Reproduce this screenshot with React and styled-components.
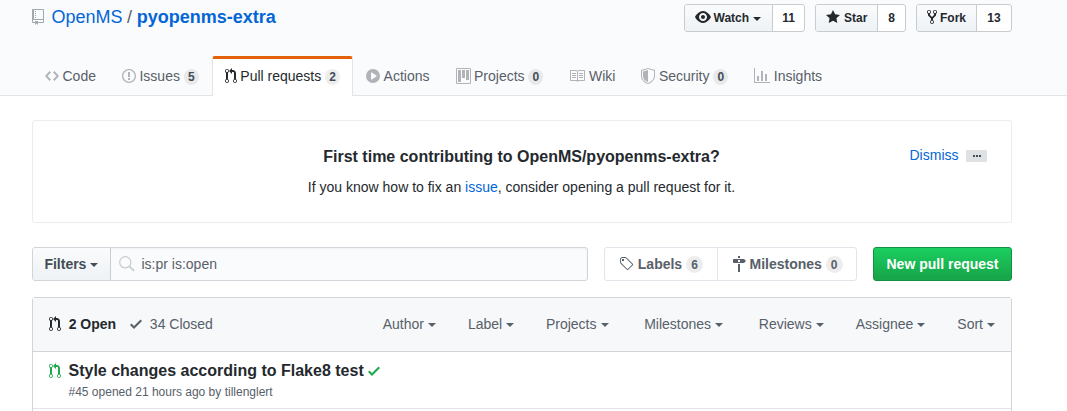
import React from "react";
import styled, { createGlobalStyle, css } from "styled-components";

const GlobalStyle = createGlobalStyle`
  * { box-sizing: border-box; }
  body {
    margin: 0;
    background: #fff;
    color: #24292e;
    font: 14px/21px "Liberation Sans", Arial, sans-serif;
  }
  a { color: #0366d6; text-decoration: none; }
`;

const ICONS = {
  repo: [12, "M4 9H3V8h1v1zm0-3H3v1h1V6zm0-2H3v1h1V4zm0-2H3v1h1V2zm8-1v12c0 .55-.45 1-1 1H6v2l-1.5-1.5L3 16v-2H1c-.55 0-1-.45-1-1V1c0-.55.45-1 1-1h10c.55 0 1 .45 1 1zm-1 10H1v2h2v-1h3v1h5v-2zm0-10H2v9h9V1z"],
  code: [14, "M9.5 3L8 4.5 11.5 8 8 11.5 9.5 13 14 8 9.5 3zm-5 0L0 8l4.5 5L6 11.5 2.5 8 6 4.5 4.5 3z"],
  issue: [14, "M7 2.3c3.14 0 5.7 2.56 5.7 5.7s-2.56 5.7-5.7 5.7A5.71 5.71 0 0 1 1.3 8c0-3.14 2.56-5.7 5.7-5.7zM7 1C3.14 1 0 4.14 0 8s3.14 7 7 7 7-3.14 7-7-3.14-7-7-7zm1 3H6v5h2V4zm0 6H6v2h2v-2z"],
  pull: [12, "M11 11.28V5c-.03-.78-.34-1.47-.94-2.06C9.46 2.35 8.78 2.03 8 2H7V0L4 3l3 3V4h1c.27.02.48.11.69.31.21.2.3.42.31.69v6.28A1.993 1.993 0 0 0 10 15a1.993 1.993 0 0 0 1-3.72zm-1 2.92c-.66 0-1.2-.55-1.2-1.2 0-.65.55-1.2 1.2-1.2.65 0 1.2.55 1.2 1.2 0 .65-.55 1.2-1.2 1.2zM4 3c0-1.11-.89-2-2-2a1.993 1.993 0 0 0-1 3.72v6.56A1.993 1.993 0 0 0 2 15a1.993 1.993 0 0 0 1-3.72V4.72c.59-.34 1-.98 1-1.72zm-.8 10c0 .66-.55 1.2-1.2 1.2-.65 0-1.2-.55-1.2-1.2 0-.65.55-1.2 1.2-1.2.65 0 1.2.55 1.2 1.2zM2 4.2C1.34 4.2.8 3.65.8 3c0-.65.55-1.2 1.2-1.2.65 0 1.2.55 1.2 1.2 0 .65-.55 1.2-1.2 1.2z"],
  play: [14, "M14 8A7 7 0 1 1 0 8a7 7 0 0 1 14 0zm-8.223 3.482l4.599-3.066a.5.5 0 0 0 0-.832L5.777 4.518A.5.5 0 0 0 5 4.934v6.132a.5.5 0 0 0 .777.416z"],
  project: [15, "M10 12h3V2h-3v10zm-4-2h3V2H6v8zm-4 4h3V2H2v12zm-1 1h13V1H1v14zM14 0H1a1 1 0 0 0-1 1v14a1 1 0 0 0 1 1h13a1 1 0 0 0 1-1V1a1 1 0 0 0-1-1z"],
  book: [16, "M3 5h4v1H3V5zm0 3h4V7H3v1zm0 2h4V9H3v1zm11-5h-4v1h4V5zm0 2h-4v1h4V7zm0 2h-4v1h4V9zm2-6v9c0 .55-.45 1-1 1H9.5l-1 1-1-1H2c-.55 0-1-.45-1-1V3c0-.55.45-1 1-1h5.5l1 1 1-1H15c.55 0 1 .45 1 1zm-8 .5L7.5 3H2v9h6V3.5zm7-.5H9.5l-.5.5V12h6V3z"],
  shield: [14, "M0 2l7-2 7 2v6.02C14 12.69 8.69 16 7 16c-1.69 0-7-3.31-7-7.98V2zm1 .75L7 1l6 1.75v5.268C13 12.104 8.449 15 7 15c-1.449 0-6-2.896-6-6.982V2.75zm1 .75L7 2v12c-1.207 0-5-2.482-5-5.985V3.5z"],
  graph: [16, "M16 14v1H0V0h1v14h15zM5 13H3V8h2v5zm4 0H7V3h2v10zm4 0h-2V6h2v7z"],
  eye: [16, "M8.06 2C3 2 0 8 0 8s3 6 8.06 6C13 14 16 8 16 8s-3-6-7.94-6zM8 12c-2.2 0-4-1.78-4-4 0-2.2 1.8-4 4-4 2.22 0 4 1.8 4 4 0 2.22-1.78 4-4 4zm2-4c0 1.11-.89 2-2 2-1.11 0-2-.89-2-2 0-1.11.89-2 2-2 1.11 0 2 .89 2 2z"],
  star: [14, "M14 6l-4.9-.64L7 1 4.9 5.36 0 6l3.6 3.26L2.67 14 7 11.67 11.33 14l-.93-4.74L14 6z"],
  fork: [10, "M8 1a1.993 1.993 0 0 0-1 3.72V6L5 8 3 6V4.72A1.993 1.993 0 0 0 2 1a1.993 1.993 0 0 0-1 3.72V6.5l3 3v1.78A1.993 1.993 0 0 0 5 15a1.993 1.993 0 0 0 1-3.72V9.5l3-3V4.72A1.993 1.993 0 0 0 8 1zM2 4.2C1.34 4.2.8 3.65.8 3c0-.65.55-1.2 1.2-1.2.65 0 1.2.55 1.2 1.2 0 .65-.55 1.2-1.2 1.2zm3 10c-.66 0-1.2-.55-1.2-1.2 0-.65.55-1.2 1.2-1.2.65 0 1.2.55 1.2 1.2 0 .65-.55 1.2-1.2 1.2zm3-10c-.66 0-1.2-.55-1.2-1.2 0-.65.55-1.2 1.2-1.2.65 0 1.2.55 1.2 1.2 0 .65-.55 1.2-1.2 1.2z"],
  tag: [14, "M7.73 1.73C7.26 1.26 6.62 1 5.96 1H3.5C2.13 1 1 2.13 1 3.5v2.47c0 .66.27 1.3.73 1.77l6.06 6.06c.39.39 1.02.39 1.41 0l4.59-4.59a.996.996 0 0 0 0-1.41L7.73 1.73zM2.38 7.09c-.31-.3-.47-.7-.47-1.13V3.5c0-.88.72-1.59 1.59-1.59h2.47c.42 0 .83.16 1.13.47l6.14 6.13-4.73 4.73-6.13-6.15zM3.01 3h2v2H3V3h.01z"],
  milestone: [14, "M8 2H6V0h2v2zm4 5H2c-.55 0-1-.45-1-1V4c0-.55.45-1 1-1h10l2 2-2 2zM8 4H6v2h2V4zM6 16h2V8H6v8z"],
  check: [12, "M12 5l-8 8-4-4 1.5-1.5L4 10l6.5-6.5L12 5z"],
};

const Svg = styled.svg`
  flex: none;
  display: block;
  fill: currentColor;
  color: ${(p) => p.$color || "inherit"};
`;

function Icon({ name, color }) {
  const [w, d] = ICONS[name];
  return (
    <Svg width={w} height="16" viewBox={`0 0 ${w} 16`} $color={color} aria-hidden="true">
      <path fillRule="evenodd" d={d} />
    </Svg>
  );
}

const Caret = styled.span`
  flex: none;
  width: 0;
  height: 0;
  margin: 1px 0 0 4px;
  border: 4px solid transparent;
  border-top-color: currentColor;
  border-bottom-width: 0;
`;

const Page = styled.div`
  height: 411px;
  overflow: hidden;
`;

const Container = styled.div`
  width: 980px;
  margin-left: 32px;
`;

const PageHead = styled.header`
  height: 96px;
  background: #fafbfc;
  border-bottom: 1px solid #e1e4e8;
`;

const TitleRow = styled.div`
  display: flex;
  justify-content: space-between;
  height: 56px;
  padding-top: 4px;
`;

const RepoTitle = styled.h1`
  display: flex;
  align-items: center;
  height: 27px;
  margin: 0;
  font-size: 18px;
  font-weight: 400;
  color: #586069;

  svg { margin: -1px 7.4px 0 0; }
  span { margin: 0 4.6px; }
`;

const Actions = styled.div`
  display: flex;
  gap: 10px;
`;

const Social = styled.div`
  display: flex;
  height: 28px;
  border: 1px solid #c9cccf;
  border-radius: 3px;
  background: #fff;
  overflow: hidden;
  font-size: 12px;
  font-weight: 700;
`;

const SocialButton = styled.span`
  display: flex;
  align-items: center;
  width: ${(p) => p.$width}px;
  padding-left: 10px;
  gap: ${(p) => p.$gap || 3}px;
  background: linear-gradient(-180deg, #fafbfc, #eff3f6 90%);

  svg { margin-top: -2px; }
  ${Caret} { margin-left: 1px; }
`;

const SocialCount = styled.span`
  display: flex;
  align-items: center;
  justify-content: center;
  width: ${(p) => p.$width}px;
  border-left: 1px solid #c9cccf;
`;

const Nav = styled.nav`
  display: flex;
  height: 40px;
`;

const Tab = styled.a`
  && { color: ${(p) => (p.$active ? "#24292e" : "#586069")}; }
  display: flex;
  align-items: center;
  height: 40px;
  padding: 0 12px 2px;
  border: 1px solid transparent;
  border-width: 3px 1px 0;
  border-radius: 3px 3px 0 0;

  svg { margin: -1px 3.5px 0 0; }

  ${(p) =>
    p.$active &&
    css`
      background: #fff;
      border-color: #e36209 #e1e4e8 transparent;
    `}
`;

const Counter = styled.span`
  margin: 1px 0 0 ${(p) => (p.$small ? 3.8 : 4)}px;
  padding: ${(p) => (p.$small ? "2px 4.2px" : "2.5px 5px")};
  border-radius: 20px;
  background: rgba(27, 31, 35, 0.08);
  color: ${(p) => (p.$small ? "#444d56" : "#586069")};
  font-size: 12px;
  font-weight: 700;
  line-height: 12px;
`;

const Notice = styled.section`
  display: grid;
  grid-template-columns: 1fr auto 1fr;
  height: 103px;
  margin-top: 24px;
  padding: 24px;
  border: 1px solid #eaecef;
  border-radius: 3px;
`;

const NoticeText = styled.div`
  grid-column: 2;
  padding-right: 1px;
  text-align: center;

  h3 { margin: 0; font-size: 16px; line-height: 24px; }
  p { margin: 8px 0 0; }
`;

const NoticeSide = styled.div`
  display: flex;
  justify-content: flex-end;
  gap: 7.5px;
`;

const Ellipsis = styled.span`
  display: flex;
  align-items: center;
  justify-content: center;
  gap: 1px;
  width: 21px;
  height: 12px;
  margin-top: 5px;
  border-radius: 1px;
  background: #dfe2e5;

  i { width: 2px; height: 2px; background: #444d56; }
`;

const Toolbar = styled.div`
  display: flex;
  height: 34px;
  margin-top: 24px;
  font-weight: 700;
  color: #586069;
`;

const Search = styled.div`
  display: flex;
  width: 556px;
  border: 1px solid #d1d5da;
  border-radius: 3px;
  background: #fafbfc;
  overflow: hidden;
  box-shadow: inset 0 1px 2px rgba(27, 31, 35, 0.05);
`;

const FilterButton = styled.span`
  display: flex;
  align-items: center;
  width: 78px;
  padding-left: 11.4px;
  border-right: 1px solid #c9cdd1;
  background: linear-gradient(-180deg, #fafbfc, #eff3f6 90%);
  color: #444d56;
`;

const Query = styled.span`
  display: flex;
  align-items: center;
  gap: 6.5px;
  padding-left: 8px;
  font-weight: 400;
`;

const LinkGroup = styled.div`
  display: flex;
  margin-left: 16px;
  border: 1px solid #e1e4e8;
  border-radius: 3px;
`;

const GroupItem = styled.span`
  display: flex;
  align-items: center;
  width: ${(p) => p.$width}px;
  padding-left: 14px;

  & + & { border-left: 1px solid #e1e4e8; }
  svg { margin-right: ${(p) => p.$gap}px; }
`;

const PrimaryButton = styled.span`
  display: flex;
  align-items: center;
  justify-content: center;
  width: 139px;
  margin-left: 16px;
  border: 1px solid #149041;
  border-radius: 3px;
  background: linear-gradient(-180deg, #1bcf60, #17a74a 90%);
  color: #fff;
`;

const Box = styled.div`
  height: 160px;
  margin-top: 16px;
  border: 1px solid #d1d5da;
  border-radius: 3px;
`;

const BoxHead = styled.div`
  display: flex;
  align-items: center;
  height: 54px;
  padding: 0 16px;
  border-bottom: 1px solid #d1d5da;
  background: #f6f8fa;
  color: #586069;
`;

const State = styled.span`
  display: flex;
  align-items: center;
  gap: 7.7px;
  margin-right: 14px;
  ${(p) => p.$active && "color: #24292e; font-weight: 700;"}

  svg { margin-top: -1px; }
`;

const Filters = styled.div`
  display: flex;
  margin-left: auto;
`;

const Filter = styled.span`
  display: flex;
  align-items: center;
  margin-left: ${(p) => p.$space}px;
`;

const Row = styled.div`
  display: flex;
  height: 57px;
  padding: 8px 16px;
  gap: 7.5px;
  border-bottom: 1px solid #e1e4e8;

  > svg { margin-top: 3px; }
`;

const RowTitle = styled.div`
  display: flex;
  align-items: center;
  gap: 4px;
  font-size: 16px;
  font-weight: 700;
  line-height: 21px;
`;

const RowMeta = styled.div`
  margin-top: 3px;
  font-size: 12px;
  line-height: 17px;
  color: #586069;
`;

const MUTED = "#b0b4b8";

const TABS = [
  ["code", "Code"],
  ["issue", "Issues", 5],
  ["pull", "Pull requests", 2],
  ["play", "Actions"],
  ["project", "Projects", 0],
  ["book", "Wiki"],
  ["shield", "Security", 0],
  ["graph", "Insights"],
];

const FILTERS = [
  ["Author", 0],
  ["Label", 32],
  ["Projects", 31.8],
  ["Milestones", 35.7],
  ["Reviews", 35.7],
  ["Assignee", 32],
  ["Sort", 32],
];

export default function App() {
  return (
    <Page>
      <GlobalStyle />
      <PageHead>
        <Container>
          <TitleRow>
            <RepoTitle>
              <Icon name="repo" color="#a3a8ad" />
              <a href="#owner">OpenMS</a>
              <span>/</span>
              <a href="#repo"><b>pyopenms-extra</b></a>
            </RepoTitle>
            <Actions>
              <Social>
                <SocialButton $width={87} $gap={2.5}><Icon name="eye" />Watch<Caret /></SocialButton>
                <SocialCount $width={32}>11</SocialCount>
              </Social>
              <Social>
                <SocialButton $width={61} $gap={4}><Icon name="star" />Star</SocialButton>
                <SocialCount $width={28}>8</SocialCount>
              </Social>
              <Social>
                <SocialButton $width={59}><Icon name="fork" />Fork</SocialButton>
                <SocialCount $width={35}>13</SocialCount>
              </Social>
            </Actions>
          </TitleRow>
          <Nav>
            {TABS.map(([icon, label, count]) => {
              const active = icon === "pull";
              return (
                <Tab key={label} href={`#${icon}`} $active={active}>
                  <Icon name={icon} color={active ? undefined : MUTED} />
                  {label}
                  {count !== undefined && <Counter $small>{count}</Counter>}
                </Tab>
              );
            })}
          </Nav>
        </Container>
      </PageHead>

      <Container as="main">
        <Notice>
          <NoticeText>
            <h3>First time contributing to OpenMS/pyopenms-extra?</h3>
            <p>If you know how to fix an <a href="#issue">issue</a>, consider opening a pull request for it.</p>
          </NoticeText>
          <NoticeSide>
            <a href="#dismiss">Dismiss</a>
            <Ellipsis><i /><i /><i /></Ellipsis>
          </NoticeSide>
        </Notice>

        <Toolbar>
          <Search>
            <FilterButton>Filters<Caret /></FilterButton>
            <Query>
              <svg width="16" height="16" viewBox="0 0 16 16" fill="none" stroke="#c6cbd1" strokeWidth="1.2">
                <circle cx="6.3" cy="6.3" r="5.6" />
                <path d="M10.5 10.5l4.6 4.4" strokeWidth="1.7" />
              </svg>
              is:pr is:open
            </Query>
          </Search>
          <LinkGroup>
            <GroupItem $width={112} $gap={4.8}><Icon name="tag" />Labels<Counter>6</Counter></GroupItem>
            <GroupItem $width={139} $gap={3.5}><Icon name="milestone" />Milestones<Counter>0</Counter></GroupItem>
          </LinkGroup>
          <PrimaryButton>New pull request</PrimaryButton>
        </Toolbar>

        <Box>
          <BoxHead>
            <State $active><Icon name="pull" />2 Open</State>
            <State><Icon name="check" />34 Closed</State>
            <Filters>
              {FILTERS.map(([label, space]) => (
                <Filter key={label} $space={space}>{label}<Caret /></Filter>
              ))}
            </Filters>
          </BoxHead>
          <Row>
            <Icon name="pull" color="#1fa84c" />
            <div>
              <RowTitle>Style changes according to Flake8 test<Icon name="check" color="#1fa84c" /></RowTitle>
              <RowMeta>#45 opened 21 hours ago by tillenglert</RowMeta>
            </div>
          </Row>
        </Box>
      </Container>
    </Page>
  );
}
